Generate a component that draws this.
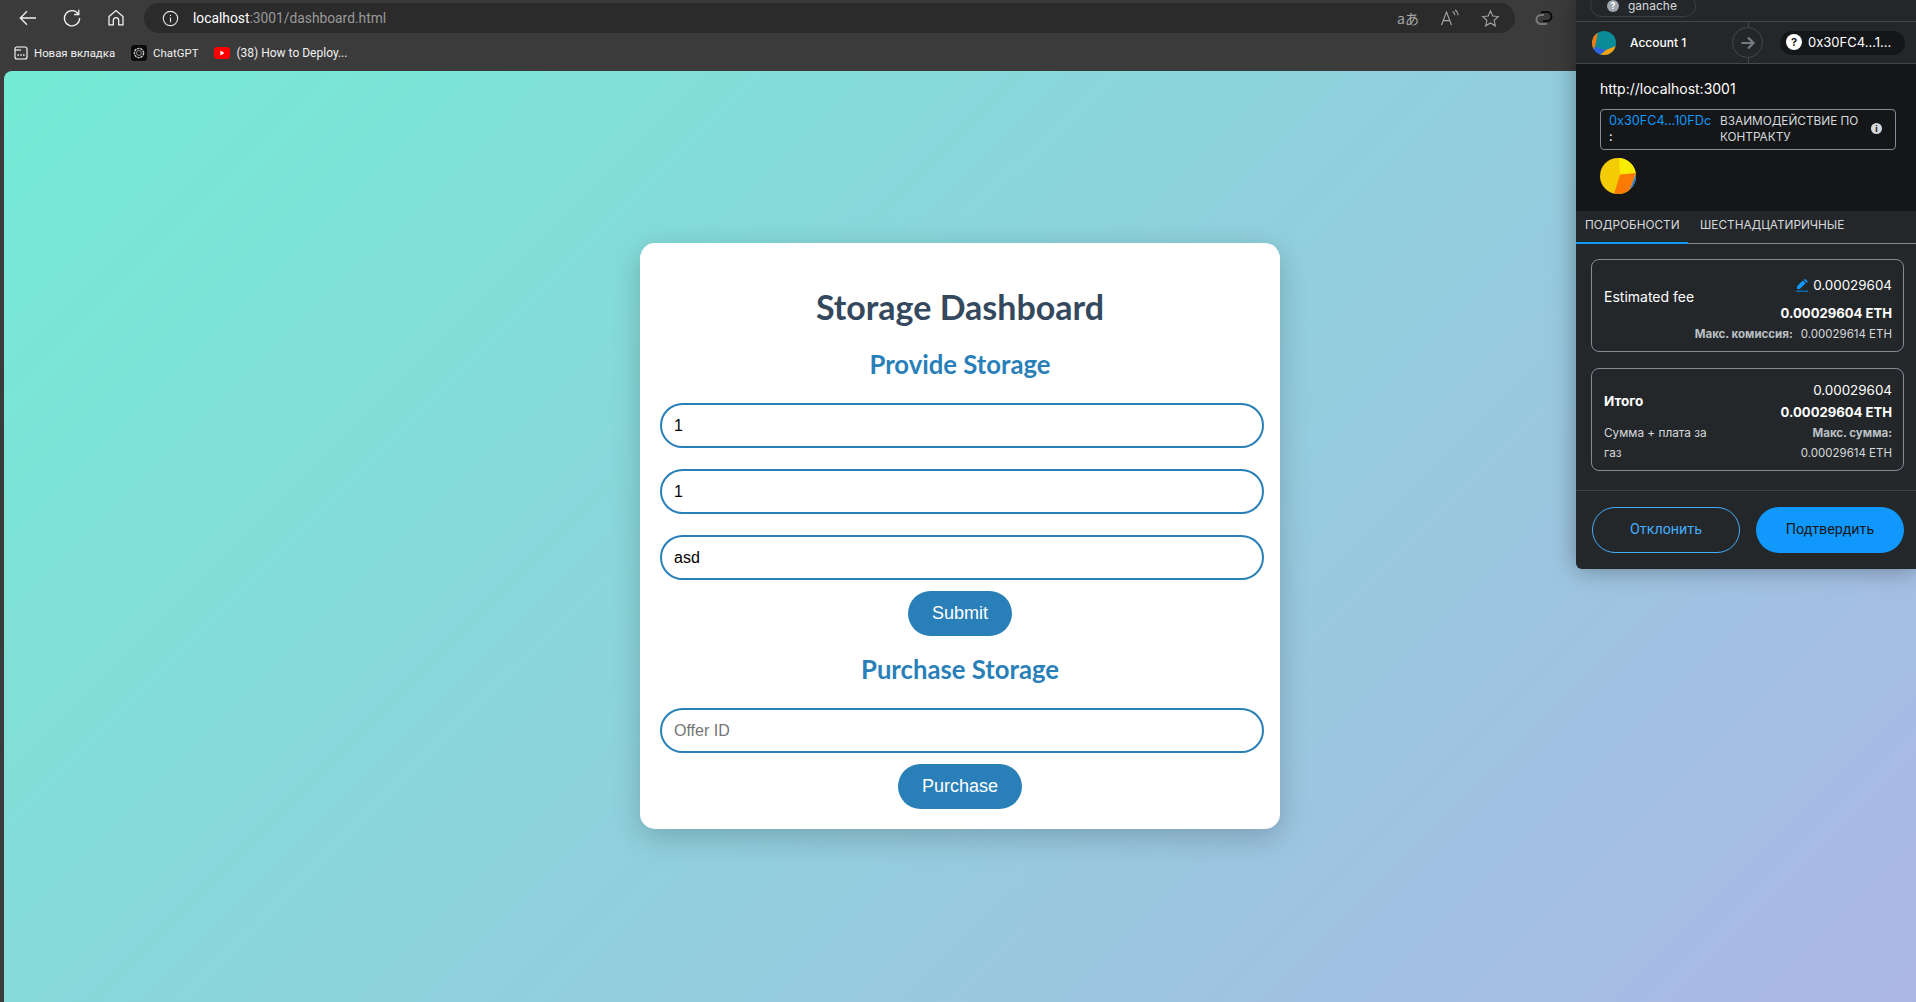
<script lang="ts">
  // Browser window with the storage dashboard page and the wallet confirm popup on top.
  const bookmarks = ['Новая вкладка', 'ChatGPT', '(38) How to Deploy...']
</script>

<div class="browser">
  <header class="toolbar">
    <button class="nav" aria-label="Back">
      <svg viewBox="0 0 20 20" width="20" height="20"><path d="M18 10H2.500M9 3.200 2.300 10 9 16.800" /></svg>
    </button>
    <button class="nav" aria-label="Reload">
      <svg viewBox="0 0 20 20" width="20" height="20"><path d="M16.400 6.200A7.600 7.600 0 1 0 17.600 10M16.800 1.800v4.700h-4.700" /></svg>
    </button>
    <button class="nav" aria-label="Home">
      <svg viewBox="0 0 20 20" width="20" height="20"><path d="M3 8.600 10 2.600l7 6v8.200h-4.300v-4.400a2.700 2.700 0 0 0-5.400 0v4.400H3z" /></svg>
    </button>
    <div class="address">
      <svg class="info" viewBox="0 0 18 18" width="17" height="17">
        <circle cx="9" cy="9" r="7.600" />
        <path d="M9 8v5M9 5v1.400" />
      </svg>
      <span class="url"><b>localhost</b>:3001/dashboard.html</span>
      <span class="address-tools">
        <span class="translate">aあ</span>
        <svg viewBox="0 0 20 18" width="20" height="18"><path d="M1.500 16 6.500 3l5 13M3.300 11.600h6.400M12.500 2.500c1.500.8 2.300 2.200 2.300 3.800M15 1c2 1.200 3 3 3 5.200" /></svg>
        <svg viewBox="0 0 20 20" width="19" height="19"><path d="m10 2 2.400 5.400 5.800.6-4.400 3.900 1.300 5.800L10 14.700l-5.100 3 1.300-5.800L1.800 8l5.800-.6z" /></svg>
      </span>
    </div>
    <svg class="ext" viewBox="0 0 18 18" width="18" height="18">
      <path class="ext-gray" d="M9 6H6a3.500 3.500 0 0 0 0 9h4a3.500 3.500 0 0 0 2-.6" />
      <path class="ext-black" d="M8 12h4a3.500 3.500 0 0 0 0-9H8a3.500 3.500 0 0 0-2 .6" />
    </svg>
  </header>

  <nav class="bookmarks">
    <span class="bookmark narrow">
      <svg viewBox="0 0 14 14" width="14" height="14">
        <rect x="1" y="1" width="12" height="12" rx="2" fill="none" stroke="#fff" stroke-width="1.100" />
        <path d="M1 4h6" stroke="#fff" stroke-width="1.100" />
        <path d="M3.500 9h1.400M6.300 9h1.400M9.100 9h1.400" stroke="#fff" stroke-width="1.500" />
      </svg>
      {bookmarks[0]}
    </span>
    <span class="bookmark narrow">
      <svg viewBox="0 0 16 16" width="16" height="16">
        <rect width="16" height="16" rx="3" fill="#0c0c0c" />
        <circle cx="8" cy="8" r="4.600" fill="none" stroke="#c9c9c9" stroke-width="1.400" stroke-dasharray="2.400 .8" />
        <circle cx="8" cy="8" r="2.400" fill="none" stroke="#9a9a9a" stroke-width="1" />
      </svg>
      {bookmarks[1]}
    </span>
    <span class="bookmark">
      <svg viewBox="0 0 16 12" width="16" height="12">
        <rect width="16" height="12" rx="3" fill="#f00" />
        <path d="M6.400 3.600v4.800L10.400 6z" fill="#fff" />
      </svg>
      {bookmarks[2]}
    </span>
  </nav>

  <main class="page">
    <section class="card">
      <h1>Storage Dashboard</h1>
      <h2>Provide Storage</h2>
      <input class="field" value="1" readonly />
      <input class="field" value="1" readonly />
      <input class="field third" value="asd" readonly />
      <button class="action">Submit</button>
      <h2 class="second">Purchase Storage</h2>
      <input class="field last" placeholder="Offer ID" readonly />
      <button class="action">Purchase</button>
    </section>
  </main>

  <aside class="wallet">
    <div class="network">
      <span class="network-pill">
        <span class="unknown gray">?</span>
        ganache
      </span>
    </div>

    <div class="accounts">
      <div class="from">
        <svg viewBox="0 0 24 24" width="24" height="24">
          <clipPath id="acc"><circle cx="12" cy="12" r="12" /></clipPath>
          <g clip-path="url(#acc)">
            <rect width="24" height="24" fill="#0a8b98" />
            <path d="M0 0h6L3 16 0 20z" fill="#f47c0c" />
            <path d="M3 16 14 19 8 24H0V20z" fill="#2d64dd" />
            <path d="M14 19 24 15V24H8z" fill="#f5a30c" />
          </g>
        </svg>
        <span>Account 1</span>
      </div>
      <div class="to">
        <span class="recipient">
          <span class="unknown">?</span>
          0x30FC4...1...
        </span>
      </div>
      <span class="arrow">
        <svg viewBox="0 0 16 16" width="16" height="16"><path d="M1.500 8h11.500M8 2.500 13.500 8 8 13.500" /></svg>
      </span>
    </div>

    <div class="origin">
      <div class="site">http://localhost:3001</div>
      <div class="contract">
        <div class="contract-address">
          <span>0x30FC4...10FDc</span>
          <span class="colon">:</span>
        </div>
        <div class="contract-label">ВЗАИМОДЕЙСТВИЕ ПО КОНТРАКТУ</div>
        <span class="dot-info">i</span>
      </div>
      <svg class="pie" viewBox="0 0 36 36" width="36" height="36">
        <clipPath id="pie"><circle cx="18" cy="18" r="18" /></clipPath>
        <g clip-path="url(#pie)">
          <rect width="36" height="36" fill="#f4cc05" />
          <path d="M19 0h17v15L20 16.500z" fill="#f8ec02" />
          <path d="M20 16.500 36 15 28 36H14z" fill="#fb7a04" />
          <path d="M36 16 28 36h8z" fill="#2674e0" />
        </g>
      </svg>
    </div>

    <div class="tabs">
      <span class="tab active">ПОДРОБНОСТИ</span>
      <span class="tab">ШЕСТНАДЦАТИРИЧНЫЕ</span>
    </div>

    <div class="details">
      <div class="box fee">
        <div class="left"><span class="fee-label">Estimated fee</span></div>
        <div class="right">
          <div class="line">
            <svg class="pencil" viewBox="0 0 12 13" width="12" height="13">
              <path d="M1 10V7.200L6.800 1.400 9.600 4.200 3.800 10zM7.800.9l.8-.6a1 1 0 0 1 1.200.1l1.500 1.500a1 1 0 0 1 .1 1.200l-.6.8z" fill="#1098fc" />
              <path d="M0 12.200h12" stroke="#0f6fb5" stroke-width="1.400" />
            </svg>
            0.00029604
          </div>
          <div class="line strong gap">0.00029604 ETH</div>
          <div class="small"><b>Макс. комиссия:</b><span>0.00029614 ETH</span></div>
        </div>
      </div>

      <div class="box total">
        <div class="left">
          <span class="total-label">Итого</span>
          <p>Сумма + плата за газ</p>
        </div>
        <div class="right">
          <div class="line">0.00029604</div>
          <div class="line strong">0.00029604 ETH</div>
          <div class="small tall"><b>Макс. сумма:</b></div>
          <div class="small tall">0.00029614 ETH</div>
        </div>
      </div>
    </div>

    <div class="footer">
      <button class="reject">Отклонить</button>
      <button class="confirm">Подтвердить</button>
    </div>
  </aside>
</div>

<style>
  :global(body) {
    margin: 0;
    background: #3b3b3b;
  }

  .browser {
    position: relative;
    display: flex;
    flex-direction: column;
    height: 100vh;
    overflow: hidden;
    background: #3b3b3b;
    font-family: Roboto, "Liberation Sans", sans-serif;
  }

  /* browser chrome */
  .toolbar {
    display: flex;
    align-items: center;
    height: 36px;
    padding-left: 6px;
    flex: none;
  }

  .nav {
    display: flex;
    align-items: center;
    justify-content: center;
    width: 44px;
    height: 36px;
    padding: 0;
    border: 0;
    background: none;
  }

  .nav path {
    fill: none;
    stroke: #f2f2f2;
    stroke-width: 1.3;
  }

  .address {
    display: flex;
    align-items: center;
    width: 1371px;
    height: 30px;
    margin-left: 6px;
    padding-left: 18px;
    box-sizing: border-box;
    border-radius: 15px;
    background: #2b2b2b;
  }

  .info circle,
  .info path {
    fill: none;
    stroke: #e4e4e4;
    stroke-width: 1.2;
  }

  .url {
    margin-left: 14px;
    font-size: 13.8px;
    color: #9a9a9a;
  }

  .url b {
    font-weight: 400;
    color: #fff;
  }

  .address-tools {
    display: flex;
    align-items: center;
    gap: 21px;
    margin-left: auto;
    margin-right: 15px;
  }

  .address-tools svg path {
    fill: none;
    stroke: #a8a8a8;
    stroke-width: 1.1;
  }

  .translate {
    font-size: 14px;
    color: #a8a8a8;
    font-family: "Noto Sans CJK JP", sans-serif;
  }

  .ext {
    margin-left: 20px;
  }

  .ext path {
    fill: none;
    stroke-width: 2;
  }

  .ext-gray {
    stroke: #77797a;
  }

  .ext-black {
    stroke: #0b0b0b;
  }

  .bookmarks {
    display: flex;
    align-items: center;
    gap: 16px;
    height: 35px;
    padding: 0 0 1px 14px;
    box-sizing: border-box;
    flex: none;
  }

  .bookmark {
    display: flex;
    align-items: center;
    gap: 6px;
    font-size: 12px;
    color: #f0f0f0;
  }

  .bookmark.narrow {
    font-size: 11.4px;
  }

  /* page */
  .page {
    flex: 1;
    display: flex;
    align-items: center;
    justify-content: center;
    margin-left: 4px;
    border-top-left-radius: 8px;
    background: linear-gradient(135deg, #74ebd5, #acb6e5);
  }

  .card {
    width: 640px;
    height: 586px;
    margin-bottom: 1px;
    padding: 20px;
    box-sizing: border-box;
    border-radius: 15px;
    background: #fff;
    text-align: center;
    box-shadow: 0 8px 30px rgba(0, 0, 0, 0.2);
    font-family: Lato, "Open Sans", sans-serif;
  }

  h1 {
    margin: 23px 0 20px;
    font-size: 34px;
    line-height: 42px;
    font-weight: 700;
    color: #34495e;
  }

  h2 {
    margin: 0 0 23px;
    font-size: 25.7px;
    line-height: 32px;
    font-weight: 700;
    color: #2980b9;
  }

  h2.second {
    margin-top: 17px;
  }

  .field {
    display: block;
    width: 604px;
    height: 45px;
    margin-bottom: 21px;
    padding: 0 12px;
    box-sizing: border-box;
    border: 2px solid #2980b9;
    border-radius: 25px;
    outline: none;
    background: #fff;
    font-family: "Liberation Sans", sans-serif;
    font-size: 16px;
    color: #000;
  }

  .field.third {
    margin-bottom: 11px;
  }

  .field.last {
    margin-bottom: 11px;
  }

  .field::placeholder {
    color: #757575;
    opacity: 1;
  }

  .action {
    display: block;
    height: 45px;
    margin: 0 auto;
    padding: 0 24px;
    border: 0;
    border-radius: 25px;
    background: #2980b9;
    font-family: "Liberation Sans", sans-serif;
    font-size: 18px;
    color: #fff;
  }

  /* wallet popup */
  .wallet {
    position: absolute;
    top: 0;
    right: 0;
    display: flex;
    flex-direction: column;
    width: 340px;
    height: 569px;
    overflow: hidden;
    border-bottom-left-radius: 6px;
    background: #24272a;
    box-shadow: 0 0 24px rgba(0, 0, 0, 0.35);
    font-family: Inter, "Liberation Sans", sans-serif;
    color: #fff;
  }

  .network {
    display: flex;
    align-items: flex-start;
    height: 21px;
    flex: none;
    overflow: hidden;
    border-bottom: 1px solid #43474c;
  }

  .network-pill {
    display: flex;
    align-items: center;
    gap: 9px;
    width: 106px;
    height: 23px;
    margin: -6px 0 0 14px;
    padding-left: 16px;
    box-sizing: border-box;
    flex: none;
    border: 1px solid #3b4046;
    border-radius: 12px;
    font-size: 12px;
    line-height: 14px;
    color: #d6d9dc;
  }

  .unknown {
    display: inline-flex;
    align-items: center;
    justify-content: center;
    width: 16px;
    height: 16px;
    border-radius: 50%;
    background: #fff;
    font-size: 11px;
    font-weight: 700;
    color: #141618;
  }

  .unknown.gray {
    width: 12px;
    height: 12px;
    background: #9fa6ae;
    font-size: 9px;
    color: #fff;
  }

  .accounts {
    position: relative;
    display: grid;
    grid-template-columns: 172px 168px;
    height: 41px;
    flex: none;
    border-bottom: 1px solid #43474c;
  }

  .from {
    display: flex;
    align-items: center;
    gap: 14px;
    padding-left: 16px;
    font-size: 12px;
    font-weight: 500;
  }

  .from span {
    margin-bottom: 1px;
  }

  .to {
    display: flex;
    align-items: center;
    border-left: 1px solid #43474c;
    padding-left: 31px;
  }

  .recipient {
    display: flex;
    align-items: center;
    gap: 6px;
    width: 125px;
    height: 24px;
    padding: 0 0 1px 6px;
    box-sizing: border-box;
    border-radius: 12px;
    background: #141618;
    font-size: 13px;
    white-space: nowrap;
  }

  .arrow {
    position: absolute;
    top: 5px;
    left: 156px;
    display: flex;
    align-items: center;
    justify-content: center;
    width: 31px;
    height: 31px;
    box-sizing: border-box;
    border: 1px solid #43474c;
    border-radius: 50%;
    background: #24272a;
  }

  .arrow path {
    fill: none;
    stroke: #737b85;
    stroke-width: 2.2;
  }

  .origin {
    height: 147px;
    flex: none;
    padding: 15px 20px 0 24px;
    box-sizing: border-box;
    background: #141618;
  }

  .site {
    font-size: 14px;
    line-height: 20px;
  }

  .contract {
    display: flex;
    align-items: center;
    width: 296px;
    height: 41px;
    margin-top: 10px;
    padding: 0 0 2px 8px;
    box-sizing: border-box;
    border: 1px solid #848c96;
    border-radius: 4px;
    font-size: 11.8px;
    line-height: 16px;
  }

  .contract-address {
    display: flex;
    flex-direction: column;
    width: 111px;
    flex: none;
    font-size: 12.7px;
    color: #1098fc;
    white-space: nowrap;
  }

  .colon {
    color: #fff;
  }

  .contract-label {
    width: 145px;
    flex: none;
    color: #d6d9dc;
  }

  .dot-info {
    display: flex;
    align-items: center;
    justify-content: center;
    width: 11px;
    height: 11px;
    margin-left: 6px;
    border-radius: 50%;
    background: #d6d9dc;
    font-size: 9px;
    font-weight: 700;
    color: #141618;
  }

  .pie {
    display: block;
    margin-top: 8px;
  }

  .tabs {
    display: flex;
    height: 33px;
    flex: none;
    box-sizing: border-box;
    border-bottom: 1px solid #848c96;
  }

  .tab {
    padding: 0 12px;
    font-size: 11.8px;
    line-height: 28px;
    color: #d6d9dc;
    white-space: nowrap;
  }

  .tab.active {
    height: 33px;
    padding: 0 8.5px 0 9px;
    box-sizing: border-box;
    border-bottom: 2px solid #1098fc;
  }

  .details {
    flex: 1;
    padding: 15px 12px 0 15px;
    display: flex;
    flex-direction: column;
    gap: 16px;
  }

  .box {
    display: flex;
    justify-content: space-between;
    box-sizing: border-box;
    border: 1px solid #848c96;
    border-radius: 8px;
    padding: 0 11px 0 12px;
  }

  .box.fee {
    height: 93px;
    padding-top: 14px;
  }

  .box.total {
    height: 103px;
    padding-top: 10px;
  }

  .fee-label,
  .total-label {
    display: block;
    margin-top: 12px;
    font-size: 14px;
    line-height: 22px;
  }

  .total-label {
    margin-top: 11px;
    margin-bottom: 11px;
    font-weight: 700;
    font-size: 13.5px;
  }

  .left p {
    width: 105px;
    margin: 0;
    font-size: 11.8px;
    line-height: 20px;
    color: #d6d9dc;
  }

  .right {
    text-align: right;
  }

  .line {
    display: flex;
    align-items: center;
    justify-content: flex-end;
    gap: 5px;
    font-size: 13.4px;
    line-height: 22px;
  }

  .line.strong {
    font-weight: 700;
    font-size: 13.1px;
  }

  .line.gap {
    margin-top: 6px;
  }

  .small {
    display: flex;
    justify-content: flex-end;
    gap: 8px;
    margin-top: 2px;
    font-size: 11.5px;
    line-height: 16px;
    color: #d6d9dc;
  }

  .small.tall {
    margin-top: 0;
    line-height: 20px;
  }

  .small b {
    color: #bbc0c5;
  }

  .footer {
    display: flex;
    gap: 16px;
    height: 79px;
    flex: none;
    padding: 16px 12px 0 16px;
    box-sizing: border-box;
    border-top: 1px solid #3b4046;
  }

  .footer button {
    width: 148px;
    height: 46px;
    padding-bottom: 4px;
    border-radius: 23px;
    box-sizing: border-box;
    font-family: Roboto, "Liberation Sans", sans-serif;
    font-size: 14.3px;
  }

  .reject {
    border: 1px solid #43aefc;
    background: none;
    color: #43aefc;
  }

  .confirm {
    border: 0;
    background: #1098fc;
    color: #141618;
  }
</style>
